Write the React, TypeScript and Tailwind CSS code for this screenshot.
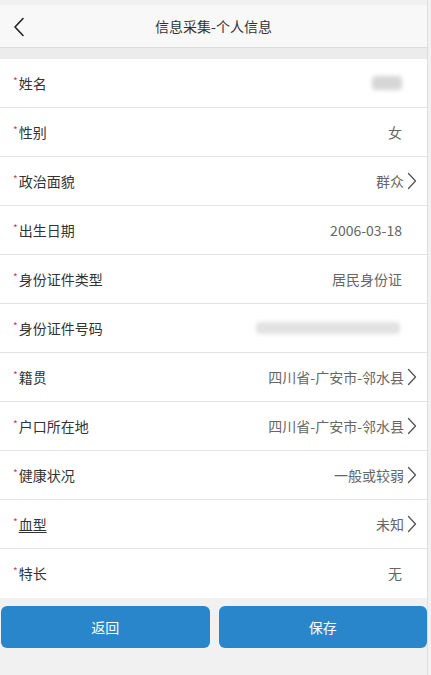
import React from 'react';

interface Field {
  label: string;
  value?: string;
  blur?: 'name' | 'id';
  arrow?: boolean;
  underline?: boolean;
}

const fields: Field[] = [
  { label: '姓名', blur: 'name' },
  { label: '性别', value: '女' },
  { label: '政治面貌', value: '群众', arrow: true },
  { label: '出生日期', value: '2006-03-18' },
  { label: '身份证件类型', value: '居民身份证' },
  { label: '身份证件号码', blur: 'id' },
  { label: '籍贯', value: '四川省-广安市-邻水县', arrow: true },
  { label: '户口所在地', value: '四川省-广安市-邻水县', arrow: true },
  { label: '健康状况', value: '一般或较弱', arrow: true },
  { label: '血型', value: '未知', arrow: true, underline: true },
  { label: '特长', value: '无' },
];

function Chevron() {
  return (
    <svg width="10" height="18" viewBox="0 0 10 18" fill="none" className="ml-[3px]">
      <path d="M1.5 1.5L8.5 9L1.5 16.5" stroke="#555" strokeWidth="1.3" strokeLinecap="round" strokeLinejoin="round" />
    </svg>
  );
}

export default function App() {
  return (
    <div
      className="w-[431px] h-[675px] bg-[#f1f1f1] overflow-hidden flex"
      style={{ fontFamily: '"Noto Sans CJK SC", "Noto Sans", sans-serif' }}
    >
      <div className="w-[427px] flex flex-col">
        <div className="h-[5px] bg-[#f0f0f0]" />

        {/* Header */}
        <div className="h-[43px] bg-[#f8f8f8] border-b border-[#dcdcdc] flex items-center relative">
          <svg width="12" height="20" viewBox="0 0 12 20" fill="none" className="ml-[13px] mt-[2px]">
            <path d="M10 1.5L2 10L10 18.5" stroke="#222" strokeWidth="1.6" strokeLinecap="round" strokeLinejoin="round" />
          </svg>
          <div className="absolute left-0 right-0 text-center text-[14px] text-[#333] pointer-events-none">
            信息采集-个人信息
          </div>
        </div>

        <div className="h-[11px] bg-[#ececec]" />

        {/* Form rows */}
        <div className="bg-white">
          {fields.map((f, i) => (
            <div
              key={f.label}
              className={`h-[49px] flex items-center pl-[13px] pr-[10px] ${i < fields.length - 1 ? 'border-b border-[#e3e3e3]' : ''}`}
            >
              <div className="flex items-center text-[14px] text-[#333]">
                <span className="text-[#c44] text-[10px] leading-none -mt-[5px] mr-px">*</span>
                <span className={f.underline ? 'underline underline-offset-2' : ''}>{f.label}</span>
              </div>
              <div className="ml-auto flex items-center text-[14px] text-[#666]">
                {f.blur === 'name' && (
                  <div className="w-[30px] h-[14px] bg-[#d6d6d6] rounded-sm blur-[2px] mr-[15px]" />
                )}
                {f.blur === 'id' && (
                  <div className="w-[144px] h-[12px] bg-[#e2e2e2] rounded-sm blur-[2px] mr-[17px]" />
                )}
                {f.value && <span className={f.arrow ? '' : 'mr-[15px]'}>{f.value}</span>}
                {f.arrow && <Chevron />}
              </div>
            </div>
          ))}
        </div>

        {/* Buttons */}
        <div className="flex gap-[9px] pl-px mt-[8px]">
          <button className="flex-1 h-[42px] rounded-[6px] bg-[#2a86cb] text-white text-[14px]">返回</button>
          <button className="flex-1 h-[42px] rounded-[6px] bg-[#2a86cb] text-white text-[14px]">保存</button>
        </div>
      </div>
      <div className="w-px bg-[#dedede]" />
    </div>
  );
}
